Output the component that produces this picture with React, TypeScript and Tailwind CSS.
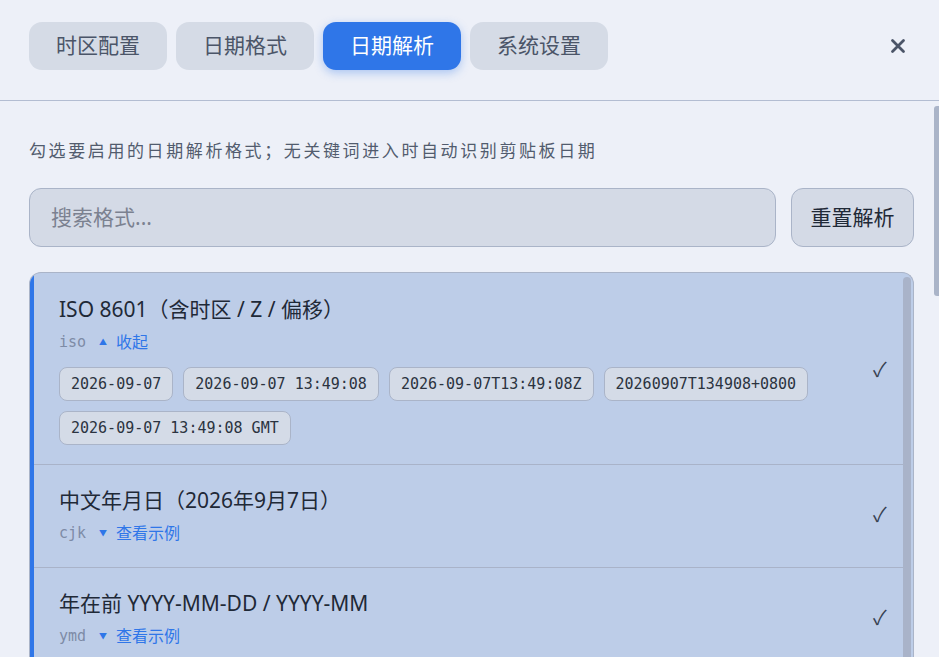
import React from "react";

const CJK = '"Noto Sans", "Noto Sans CJK SC", sans-serif';
const MONO = '"DejaVu Sans Mono", "Noto Sans CJK SC", monospace';

type Item = {
  title: string;
  key: string;
  expanded: boolean;
  examples?: string[];
};

const items: Item[] = [
  {
    title: "ISO 8601（含时区 / Z / 偏移）",
    key: "iso",
    expanded: true,
    examples: [
      "2026-09-07",
      "2026-09-07 13:49:08",
      "2026-09-07T13:49:08Z",
      "20260907T134908+0800",
      "2026-09-07 13:49:08 GMT",
    ],
  },
  { title: "中文年月日（2026年9月7日）", key: "cjk", expanded: false },
  { title: "年在前 YYYY-MM-DD / YYYY-MM", key: "ymd", expanded: false },
];

const tabs = ["时区配置", "日期格式", "日期解析", "系统设置"];

export default function App() {
  return (
    <div
      className="relative h-[657px] w-[939px] overflow-hidden bg-[#edf0f8]"
      style={{ fontFamily: CJK }}
    >
      {/* header */}
      <div className="flex h-[101px] items-start border-b border-[#b3bdd2] pl-[29px] pr-[33px] pt-[22px]">
        <div className="flex gap-[9px]">
          {tabs.map((t, i) => (
            <div
              key={t}
              className={
                i === 2
                  ? "flex h-[48px] w-[138px] items-center justify-center rounded-[13px] bg-[#2f76e8] text-[21px] text-white shadow-[0_3px_10px_rgba(47,118,232,0.35)]"
                  : "flex h-[48px] w-[138px] items-center justify-center rounded-[13px] bg-[#d5dbe6] text-[21px] text-[#4b5568]"
              }
            >
              {t}
            </div>
          ))}
        </div>
        <div className="ml-auto flex h-[48px] items-center">
          <svg width="16" height="16" viewBox="0 0 16 16">
            <path
              d="M2.5 2.5 L13.5 13.5 M13.5 2.5 L2.5 13.5"
              stroke="#4b5568"
              strokeWidth="2.8"
              strokeLinecap="round"
            />
          </svg>
        </div>
      </div>

      {/* body */}
      <div className="pl-[29px] pr-[25px] pt-[38px]">
        <div className="text-[17px] leading-[24px] tracking-[2.6px] text-[#525c6e]">
          勾选要启用的日期解析格式；无关键词进入时自动识别剪贴板日期
        </div>
        <div className="mt-[25px] flex gap-[15px]">
          <div className="flex h-[59px] flex-1 items-center rounded-[12px] border border-[#aab4c8] bg-[#d4dae6] px-[21px] text-[21px] text-[#7b8190]">
            搜索格式...
          </div>
          <div className="flex h-[59px] w-[123px] items-center justify-center rounded-[12px] border border-[#aab4c8] bg-[#d4dae6] text-[21px] text-[#1f2937]">
            重置解析
          </div>
        </div>

        {/* list */}
        <div className="mt-[25px] flex overflow-hidden rounded-t-[12px] border border-b-0 border-[#aab4c8] bg-[#bdcde8]">
          <div className="flex-1">
            {items.map((it, idx) => (
              <div
                key={it.key}
                className={
                  "flex items-center border-l-[4px] border-[#2f76e8] pl-[25px] pr-[14px] " +
                  (idx > 0 ? "shadow-[inset_0_1px_0_#a9b3c9] " : "") +
                  (it.expanded ? "pb-[19px] pt-[22px]" : "pb-[23px] pt-[22px]")
                }
              >
                <div className="flex-1">
                  <div className="text-[21px] leading-[29px] text-[#1f2937]">{it.title}</div>
                  <div className="mt-[7px] flex items-center leading-[22px]">
                    <span className="text-[15px] text-[#7d8ba6]" style={{ fontFamily: MONO }}>
                      {it.key}
                    </span>
                    <span className="ml-[13px] text-[8px] text-[#2f76e8]">{it.expanded ? "▲" : "▼"}</span>
                    <span className="ml-[9px] text-[16px] text-[#2f76e8]">{it.expanded ? "收起" : "查看示例"}</span>
                  </div>
                  {it.examples && (
                    <div className="mt-[14px] flex flex-wrap gap-[10px]">
                      {it.examples.map((e) => (
                        <div
                          key={e}
                          className="flex h-[34px] items-center rounded-[8px] border border-[#aab4c8] bg-[#d4dbe7] px-[11px] text-[15px] text-[#2b3340]"
                          style={{ fontFamily: MONO }}
                        >
                          {e}
                        </div>
                      ))}
                    </div>
                  )}
                </div>
                <div className="w-[16px] text-[20px] text-[#374151]">✓</div>
              </div>
            ))}
          </div>
          {/* inner scrollbar */}
          <div className="w-[10px] pt-[4px]">
            <div className="h-[400px] w-[8px] rounded-t-[4px] bg-[#a9b3c9]" />
          </div>
        </div>
      </div>

      {/* outer scrollbar thumb */}
      <div className="absolute right-0 top-[106px] h-[190px] w-[5px] rounded-l-[3px] bg-[#aab4c8]" />
    </div>
  );
}
